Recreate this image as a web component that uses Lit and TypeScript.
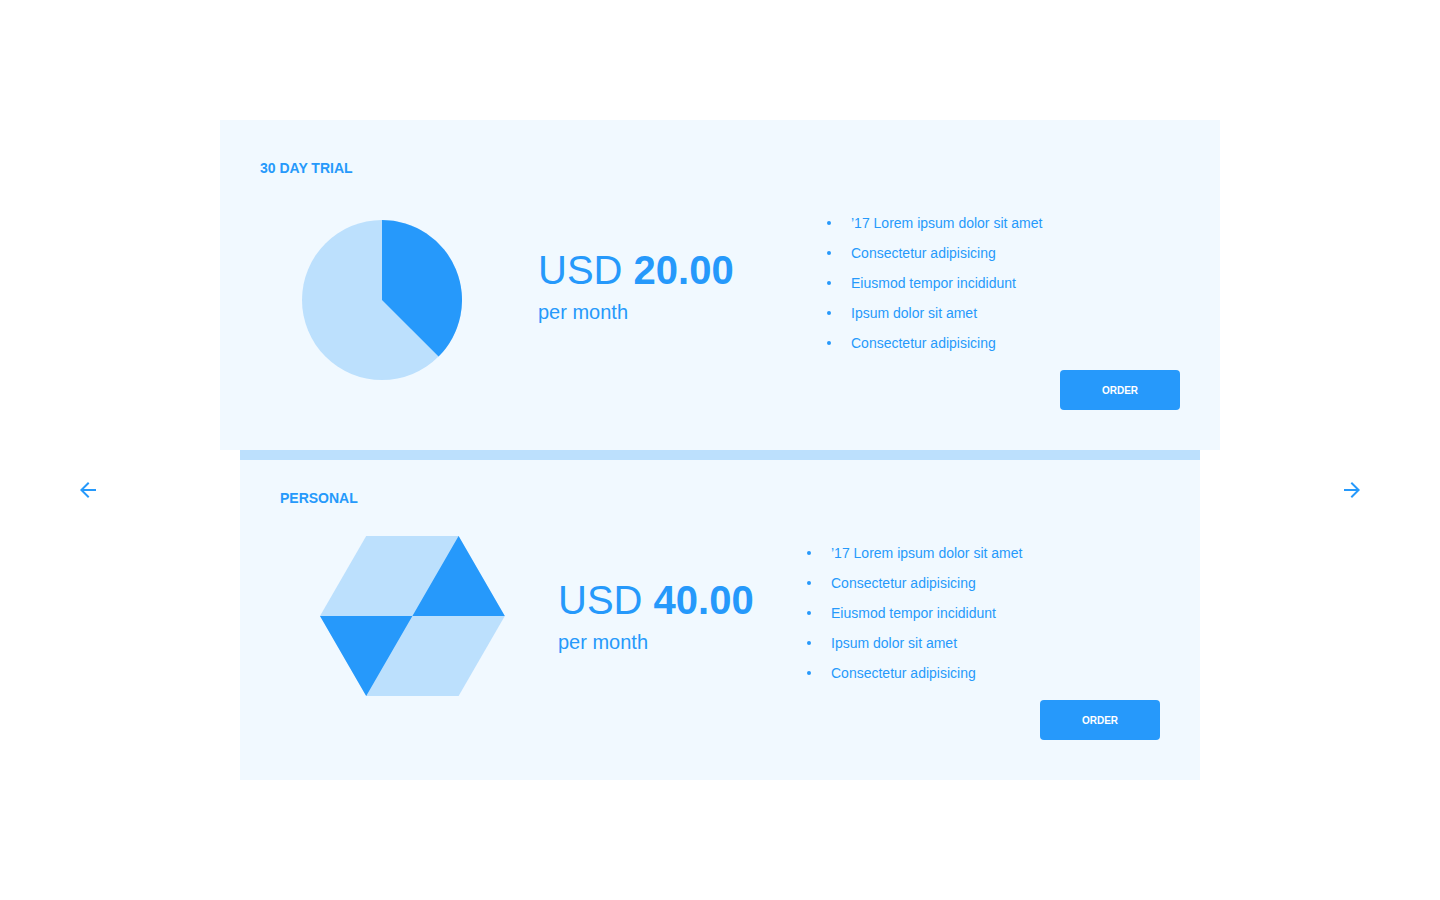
import { LitElement, html, svg, css } from "lit";
import { customElement, property } from "lit/decorators.js";

const FEATURES = [
  "’17 Lorem ipsum dolor sit amet",
  "Consectetur adipisicing",
  "Eiusmod tempor incididunt",
  "Ipsum dolor sit amet",
  "Consectetur adipisicing",
];

const pie = svg`
  <circle cx="80" cy="80" r="80" fill="#bce0fd"></circle>
  <path d="M80 80V0A80 80 0 0 1 136.57 136.57Z" fill="#2699fb"></path>`;

const hexagon = svg`
  <path d="M46.2 0H138.6L184.8 80L138.6 160H46.2L0 80Z" fill="#bce0fd"></path>
  <path d="M138.6 0L184.8 80H92.4Z M0 80H92.4L46.2 160Z" fill="#2699fb"></path>`;

@customElement("plan-card")
class PlanCard extends LitElement {
  @property() name = "";
  @property() amount = "";
  @property() shape: "pie" | "hexagon" = "pie";

  static styles = css`
    :host {
      display: block;
      box-sizing: border-box;
      height: 330px;
      padding: 40px;
      background: #f1f9ff;
    }
    :host([raised]) {
      width: 1000px;
      --figure-width: 278px;
      --figure-indent: 42px;
      --figure-top: 44px;
      --price-width: 289px;
    }
    :host([tucked]) {
      width: 960px;
      padding-top: 30px;
      border-top: 10px solid #bce0fd;
      --figure-width: 278px;
      --figure-indent: 40px;
      --figure-top: 30px;
      --price-width: 249px;
    }
    .title {
      margin: 0;
      height: 16px;
      line-height: 16px;
      font-size: 14px;
      font-weight: 700;
    }
    .body {
      display: flex;
      align-items: flex-start;
    }
    .figure {
      box-sizing: border-box;
      flex: none;
      width: var(--figure-width);
      padding: var(--figure-top) 0 0 var(--figure-indent);
    }
    .figure svg {
      display: block;
    }
    .price {
      flex: none;
      width: var(--price-width);
      padding-top: 71px;
    }
    .amount {
      font-size: 40px;
      line-height: 46px;
      white-space: nowrap;
    }
    .period {
      margin-top: 8px;
      font-size: 20px;
      line-height: 23px;
    }
    .features {
      list-style: none;
      margin: 0;
      padding: 32px 0 0;
      font-size: 14px;
      line-height: 30px;
    }
    .feature {
      display: flex;
      align-items: center;
      gap: 20px;
      height: 30px;
    }
    .dot {
      width: 4px;
      height: 4px;
      border-radius: 50%;
      background: #2699fb;
    }
    .footer {
      display: flex;
      justify-content: flex-end;
    }
    .content {
      height: 210px;
    }
    .order {
      width: 120px;
      height: 40px;
      padding: 0;
      border: 0;
      border-radius: 4px;
      background: #2699fb;
      color: #fff;
      font: 700 10px "Liberation Sans", Arial, sans-serif;
    }
  `;

  render() {
    const isPie = this.shape === "pie";
    return html`
      <div class="content">
        <h2 class="title">${this.name}</h2>
        <div class="body">
          <div class="figure">
            <svg width=${isPie ? 160 : 184.8} height="160">
              ${isPie ? pie : hexagon}
            </svg>
          </div>
          <div class="price">
            <div class="amount">USD <b>${this.amount}</b></div>
            <div class="period">per month</div>
          </div>
          <ul class="features">
            ${FEATURES.map(
              (f) => html`<li class="feature"><span class="dot"></span><span>${f}</span></li>`
            )}
          </ul>
        </div>
      </div>
      <div class="footer"><button class="order">ORDER</button></div>
    `;
  }
}

@customElement("app-root")
class AppRoot extends LitElement {
  static styles = css`
    :host {
      display: flex;
      box-sizing: border-box;
      height: 900px;
      padding: 120px 80px;
      justify-content: space-between;
      align-items: flex-start;
      overflow: hidden;
      background: #fff;
      color: #2699fb;
      font-family: "Liberation Sans", Arial, sans-serif;
    }
    .cards {
      display: flex;
      flex-direction: column;
      align-items: center;
    }
    .arrow {
      margin: 362px 0 0;
      padding: 0;
      border: 0;
      width: 16px;
      height: 16px;
      background: none;
    }
    .arrow svg {
      display: block;
      fill: #2699fb;
    }
  `;

  render() {
    return html`
      <button class="arrow" aria-label="Previous">
        <svg width="16" height="16" viewBox="0 0 16 16">
          <path d="M16 7H3.83l5.59-5.59L8 0 0 8l8 8 1.41-1.41L3.83 9H16z"></path>
        </svg>
      </button>
      <main class="cards">
        <plan-card raised name="30 DAY TRIAL" amount="20.00" shape="pie"></plan-card>
        <plan-card tucked name="PERSONAL" amount="40.00" shape="hexagon"></plan-card>
      </main>
      <button class="arrow" aria-label="Next">
        <svg width="16" height="16" viewBox="0 0 16 16">
          <path d="M8 0L6.59 1.41 12.17 7H0v2h12.17l-5.58 5.59L8 16l8-8z"></path>
        </svg>
      </button>
    `;
  }
}
